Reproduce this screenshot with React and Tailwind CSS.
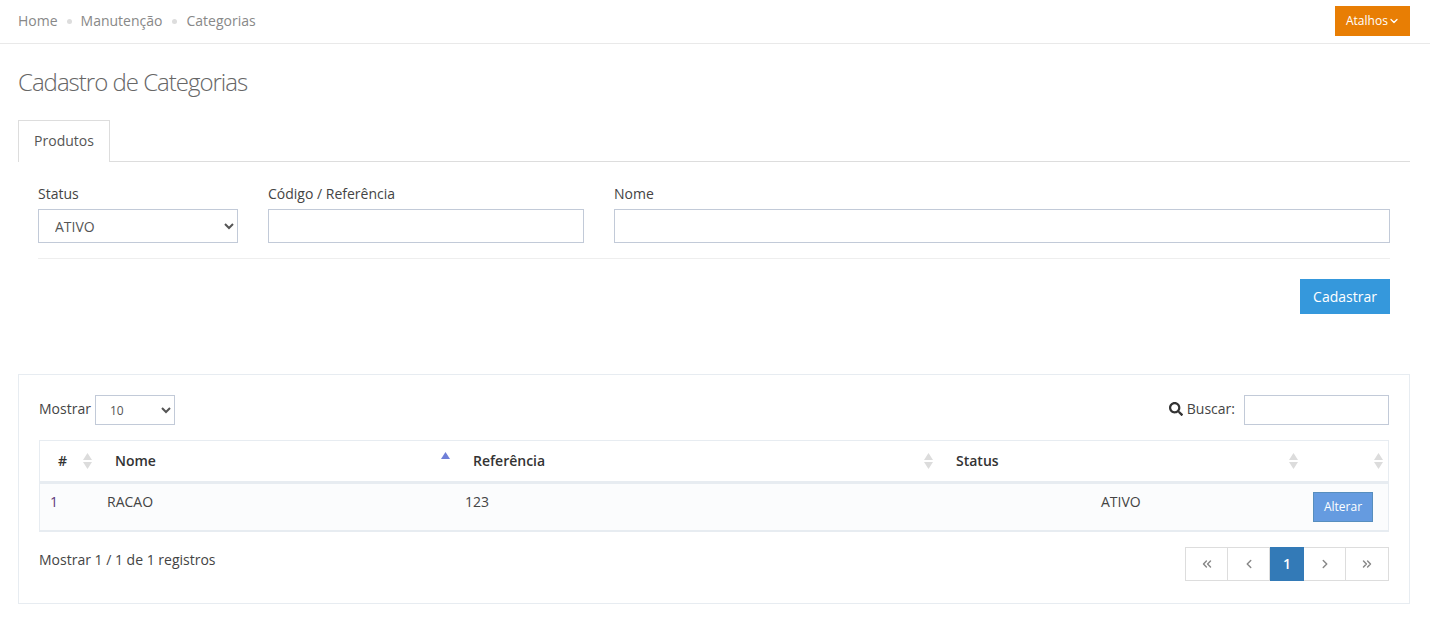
import React from 'react';
import { ChevronDown, ChevronLeft, ChevronRight, ChevronsLeft, ChevronsRight } from 'lucide-react';
import { FaSearch } from 'react-icons/fa';

const inputClass = 'h-[34px] w-full border border-[#c2cad8] bg-white px-3 text-sm text-[#555] outline-none';

// up = only the active ascending arrow, otherwise both grey arrows
function SortIcon({ up }) {
  if (up) {
    return (
      <svg width="9" height="7" viewBox="0 0 9 7" className="mb-[11px] shrink-0">
        <path d="M4.5 0 L9 7 L0 7 Z" fill="#6f7fd8" />
      </svg>
    );
  }
  return (
    <svg width="9" height="16" viewBox="0 0 9 16" className="shrink-0">
      <path d="M4.5 0 L9 7 L0 7 Z" fill="#dcdcdc" />
      <path d="M0 9 L9 9 L4.5 16 Z" fill="#dcdcdc" />
    </svg>
  );
}

function HeaderCell({ label, up, className }) {
  return (
    <div className={`flex items-center justify-between text-sm font-semibold text-[#333] ${className}`}>
      <span>{label}</span>
      <SortIcon up={up} />
    </div>
  );
}

function PageButton({ children, className }) {
  return (
    <div className={`flex h-[34px] items-center justify-center border border-[#ddd] bg-white text-[#888] ${className}`}>
      {children}
    </div>
  );
}

export default function App() {
  return (
    <div className="min-h-[624px] bg-white font-['Open_Sans',sans-serif] text-sm text-[#444]">
      <div className="flex h-11 items-center justify-between border-b border-[#e9e9e9] pb-px pl-[18px] pr-5">
        <div className="flex items-center text-[#888]">
          <span>Home</span>
          <span className="mx-[9px] h-[5px] w-[5px] rounded-full bg-[#dddddd]" />
          <span className="pr-px">Manutenção</span>
          <span className="mx-[9px] h-[5px] w-[5px] rounded-full bg-[#dddddd]" />
          <span>Categorias</span>
        </div>
        <button className="flex h-[30px] w-[75px] items-center bg-[#e87e04] pl-[11px] text-xs text-white">
          Atalhos
          <ChevronDown size={12} strokeWidth={2.5} />
        </button>
      </div>

      <div className="pl-[18px] pr-5">
        <h1 className="mt-[22px] text-2xl font-light leading-[32px] tracking-[-1px] text-[#666]">
          Cadastro de Categorias
        </h1>

        <div className="mt-[22px] flex h-[42px] border-b border-[#dddddd]">
          <div className="-mb-px flex h-[42px] w-[92px] items-center justify-center border border-b-0 border-[#dddddd] bg-white pb-[2px] text-[#555]">
            Produtos
          </div>
        </div>

        <div className="px-5">
          <div className="mt-[22px] flex gap-[30px]">
            <div className="w-[200px] shrink-0">
              <label className="mb-[5px] block leading-[20px]">Status</label>
              <select className={inputClass}>
                <option>ATIVO</option>
              </select>
            </div>
            <div className="w-[316px] shrink-0">
              <label className="mb-[5px] block leading-[20px]">Código / Referência</label>
              <input className={inputClass} />
            </div>
            <div className="flex-1">
              <label className="mb-[5px] block leading-[20px]">Nome</label>
              <input className={inputClass} />
            </div>
          </div>
          <div className="mt-[15px] border-t border-[#eeeeee] pt-5">
            <div className="flex justify-end">
              <button className="h-[35px] w-[90px] bg-[#3598dc] text-sm text-white">Cadastrar</button>
            </div>
          </div>
        </div>

        <div className="mt-[60px] h-[230px] border border-[#e7ecf1] px-5 pt-5">
          <div className="flex h-[30px] items-center justify-between">
            <div className="flex items-center gap-1">
              <span className="pb-[2px]">Mostrar</span>
              <select className="h-[30px] w-20 border border-[#c2cad8] bg-white px-[10px] text-xs text-[#555]">
                <option>10</option>
              </select>
            </div>
            <div className="flex items-center">
              <FaSearch size={14} className="mb-[2px] mr-1 text-[#333]" />
              <span className="pb-[2px]">Buscar:</span>
              <input className="ml-[9px] h-[30px] w-[145px] border border-[#c2cad8] bg-white" />
            </div>
          </div>

          <div className="mt-[15px] border border-b-0 border-[#e7ecf1]">
            <div className="box-content grid h-10 grid-cols-[59px_358px_483px_365px_1fr] border-b-[3px] border-[#e7ecf1]">
              <HeaderCell label="#" className="pl-[18px] pr-[7px]" />
              <HeaderCell label="Nome" up className="pl-4 pr-[7px]" />
              <HeaderCell label="Referência" className="pl-4 pr-[7px]" />
              <HeaderCell label="Status" className="pl-4 pr-[7px]" />
              <HeaderCell label="" className="pl-4 pr-[5px]" />
            </div>
            <div className="box-content grid h-[46px] grid-cols-[56px_358px_636px_215px_1fr] border-b-[2px] border-[#e7ecf1] bg-[#fbfcfd]">
              <div className="pl-[10px] pt-2 leading-[20px] text-[#5b3a7a]">1</div>
              <div className="pl-[11px] pt-2 leading-[20px]">RACAO</div>
              <div className="pl-[11px] pt-2 leading-[20px]">123</div>
              <div className="pl-[11px] pt-2 leading-[20px]">ATIVO</div>
              <div className="pl-2 pt-2">
                <button className="h-[30px] w-[60px] border border-[#578ebe] bg-[#659be0] text-xs text-white">
                  Alterar
                </button>
              </div>
            </div>
          </div>

          <div className="mt-[15px] flex items-start justify-between">
            <div className="pt-[3px] leading-[20px]">Mostrar 1 / 1 de 1 registros</div>
            <div className="flex">
              <PageButton className="w-[43px]"><ChevronsLeft size={14} strokeWidth={2.5} /></PageButton>
              <PageButton className="-ml-px w-[43px]"><ChevronLeft size={14} strokeWidth={2.5} /></PageButton>
              <div className="flex h-[34px] w-[34px] items-center justify-center bg-[#337ab7] text-sm font-semibold text-white">1</div>
              <PageButton className="w-[42px] border-l-0"><ChevronRight size={14} strokeWidth={2.5} /></PageButton>
              <PageButton className="w-[43px] border-l-0"><ChevronsRight size={14} strokeWidth={2.5} /></PageButton>
            </div>
          </div>
        </div>
      </div>
    </div>
  );
}
